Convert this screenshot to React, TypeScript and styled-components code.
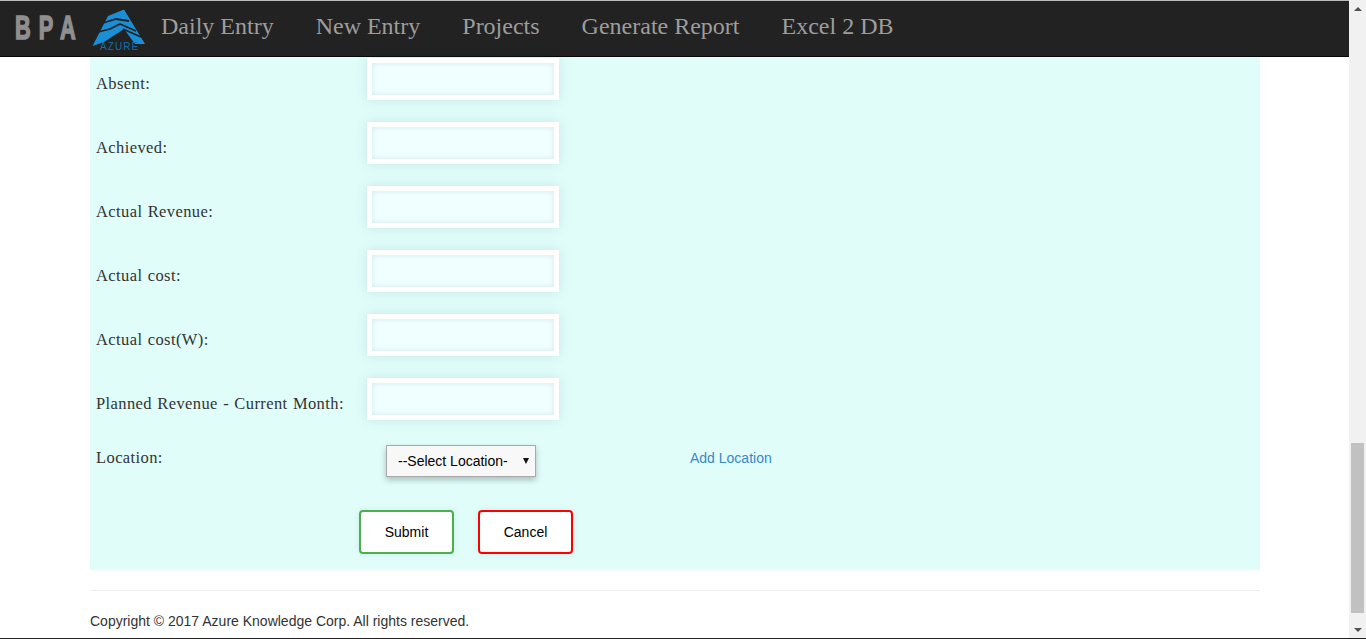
import React from 'react';
import styled, { createGlobalStyle } from 'styled-components';

const GlobalStyle = createGlobalStyle`
    html, body {
        margin: 0;
        padding: 0;
        height: 100%;
        overflow: hidden;
        background: #fff;
    }
    * {
        box-sizing: border-box;
    }
`;

const Screen = styled.div`
    display: flex;
    height: 639px;
    border-bottom: 1px solid #222;
`;

const Page = styled.div`
    flex: 1 0 auto;
    width: 0;
    display: flex;
    flex-direction: column;
    overflow: hidden;
`;

const Navbar = styled.nav`
    flex: 0 0 57px;
    display: flex;
    align-items: center;
    background: #222;
    border-top: 1px solid #bbb;
    border-bottom: 1px solid #080808;
    padding-left: 15px;
`;

const Brand = styled.span`
    width: 62px;
    margin-right: 15px;
    margin-top: -4px;
    font-family: 'Liberation Sans', Arial, sans-serif;
    font-weight: 700;
    font-size: 32px;
    line-height: 1;
    letter-spacing: 12px;
    color: #8f8f8f;
    white-space: nowrap;
    transform: scale(0.68, 1.06);
    transform-origin: left center;
    -webkit-text-stroke: 1.5px #8f8f8f;
`;

const Logo = styled.div`
    position: relative;
    width: 54px;
    height: 44px;
    margin-right: 15px;
    margin-top: 4px;
    svg {
        display: block;
    }
`;

const LogoText = styled.span`
    position: absolute;
    left: 8px;
    bottom: 2px;
    font-family: 'Liberation Sans', Arial, sans-serif;
    font-size: 10px;
    line-height: 8px;
    letter-spacing: 1.1px;
    color: #0f6fa8;
`;

const NavLink = styled.a`
    font-family: 'Liberation Serif', 'Times New Roman', serif;
    font-size: 24px;
    color: #9d9d9d;
    margin-right: 42px;
    white-space: nowrap;
    margin-top: -5px;
`;

const Container = styled.main`
    width: 1170px;
    margin-left: 90px;
`;

const FormPanel = styled.form`
    background: #e0fdfa;
    height: 513px;
    padding: 1px 6px 0;
`;

const Row = styled.div`
    display: flex;
    height: 64px;
`;

const Label = styled.label<{ $inline?: boolean }>`
    width: 271px;
    padding-top: ${(p) => (p.$inline ? '2px' : '15px')};
    font-family: 'Liberation Serif', 'Times New Roman', serif;
    font-size: 16.5px;
    letter-spacing: 0.4px;
    word-spacing: 0.8px;
    line-height: 22px;
    color: #333;
    white-space: nowrap;
`;

const TextInput = styled.input`
    width: 192px;
    height: 42px;
    border: 5px solid #fff;
    background: #f0ffff;
    outline: none;
    box-shadow: inset 0 0 6px rgba(0, 0, 0, 0.1), 0 0 12px rgba(0, 80, 70, 0.12);
`;

const LocationRow = styled.div`
    display: flex;
    height: 68px;
    padding-top: 3px;
`;

const SelectWrap = styled.div`
    position: relative;
    width: 150px;
    height: 32px;
    margin-left: 19px;
    &::after {
        content: '';
        position: absolute;
        right: 7px;
        top: 13px;
        border-left: 3px solid transparent;
        border-right: 3px solid transparent;
        border-top: 6px solid #111;
    }
`;

const Select = styled.select`
    width: 100%;
    height: 100%;
    appearance: none;
    border: 1px solid #a9a9a9;
    border-radius: 0;
    background: #f8f8f8;
    padding: 0 0 0 11px;
    font-family: 'Liberation Sans', Arial, sans-serif;
    font-size: 14px;
    color: #000;
    box-shadow: 0 3px 6px rgba(0, 0, 0, 0.25);
`;

const AddLink = styled.a`
    margin-left: 154px;
    margin-top: 3px;
    font-family: 'Liberation Sans', Arial, sans-serif;
    font-size: 14px;
    line-height: 20px;
    color: #3a87c8;
`;

const Actions = styled.div`
    display: flex;
    gap: 24px;
    margin-left: 263px;
`;

const ActionButton = styled.button<{ $tone: string }>`
    width: 95px;
    height: 44px;
    background: #fff;
    border: 2px solid ${(p) => p.$tone};
    border-radius: 4px;
    font-family: 'Liberation Sans', Arial, sans-serif;
    font-size: 14px;
    color: #000;
    box-shadow: 0 0 6px rgba(0, 80, 70, 0.1);
`;

const Footer = styled.footer`
    margin-top: 20px;
    border-top: 1px solid #eee;
    padding-top: 20px;
    font-family: 'Liberation Sans', Arial, sans-serif;
    font-size: 14px;
    line-height: 20px;
    color: #333;
`;

const Scrollbar = styled.div`
    flex: 0 0 17px;
    display: flex;
    flex-direction: column;
    align-items: center;
    background: #f1f1f1;
`;

const ScrollArrow = styled.div<{ $down?: boolean }>`
    flex: 0 0 17px;
    display: flex;
    align-items: center;
    justify-content: center;
    &::before {
        content: '';
        border-left: 4px solid transparent;
        border-right: 4px solid transparent;
        ${(p) => (p.$down ? 'border-top: 4px solid #505050;' : 'border-bottom: 4px solid #505050;')}
    }
`;

const ScrollTrack = styled.div`
    flex: 1;
    width: 100%;
    display: flex;
    justify-content: center;
    align-items: flex-end;
    padding-bottom: 8px;
`;

const ScrollThumb = styled.div`
    width: 13px;
    height: 170px;
    background: #c1c1c1;
`;

const fields = ['Absent:', 'Achieved:', 'Actual Revenue:', 'Actual cost:', 'Actual cost(W):', 'Planned Revenue - Current Month:'];
const links = ['Daily Entry', 'New Entry', 'Projects', 'Generate Report', 'Excel 2 DB'];

export default function App() {
    return (
        <>
            <GlobalStyle />
            <Screen>
                <Page>
                    <Navbar>
                        <Brand>BPA</Brand>
                        <Logo>
                            <svg width="54" height="44" viewBox="0 0 54 44">
                                <path fill="#1b8fd6" d="M16 7 L32 0.500 L53 35 L43 35 L32 20 L12 33 L0.500 37 Z" />
                                <g fill="none" stroke="#222" strokeWidth="1.8">
                                    <path d="M11 14 L24 10 L37 12" />
                                    <path d="M6 23 L18 20 L28 15 L44 22" />
                                    <path d="M31 20 L49 28" />
                                </g>
                            </svg>
                            <LogoText>AZURE</LogoText>
                        </Logo>
                        {links.map((link) => (
                            <NavLink key={link}>{link}</NavLink>
                        ))}
                    </Navbar>
                    <Container>
                        <FormPanel>
                            {fields.map((field) => (
                                <Row key={field}>
                                    <Label>{field}</Label>
                                    <TextInput type="text" />
                                </Row>
                            ))}
                            <LocationRow>
                                <Label as="span" $inline>Location:</Label>
                                <SelectWrap>
                                    <Select defaultValue="">
                                        <option value="">--Select Location-</option>
                                    </Select>
                                </SelectWrap>
                                <AddLink>Add Location</AddLink>
                            </LocationRow>
                            <Actions>
                                <ActionButton type="button" $tone="#4cae4c">Submit</ActionButton>
                                <ActionButton type="button" $tone="#f00">Cancel</ActionButton>
                            </Actions>
                        </FormPanel>
                        <Footer>Copyright © 2017 Azure Knowledge Corp. All rights reserved.</Footer>
                    </Container>
                </Page>
                <Scrollbar>
                    <ScrollArrow />
                    <ScrollTrack>
                        <ScrollThumb />
                    </ScrollTrack>
                    <ScrollArrow $down />
                </Scrollbar>
            </Screen>
        </>
    );
}
